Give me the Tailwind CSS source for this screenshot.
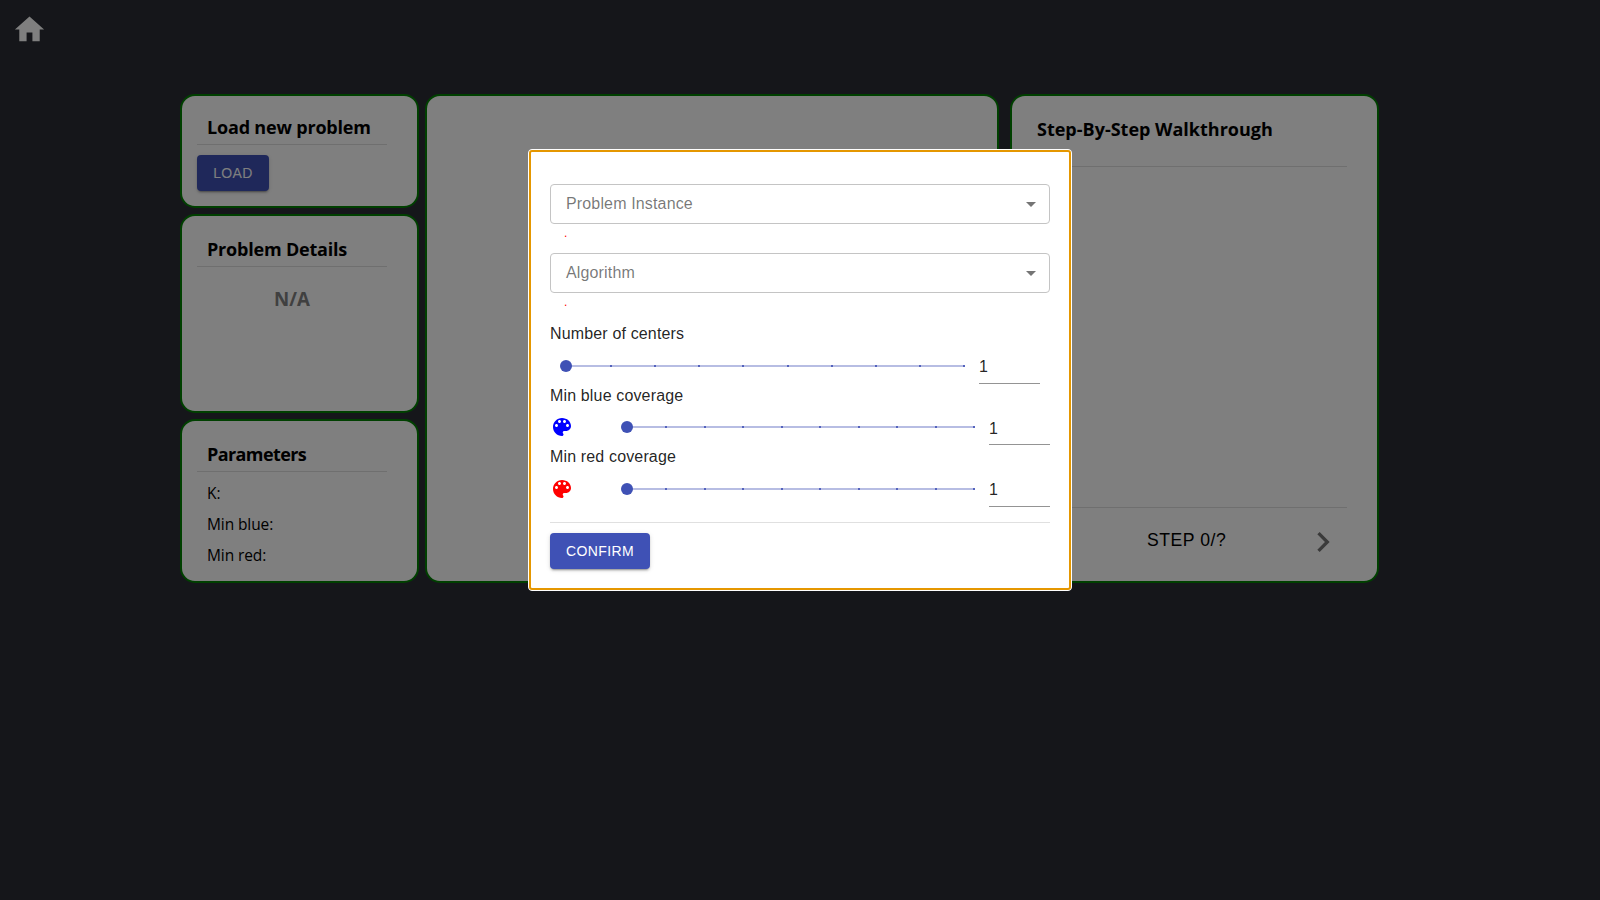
<!DOCTYPE html>
<html lang="en">
<head>
<meta charset="utf-8">
<title>Clustering walkthrough</title>
<script src="https://cdn.jsdelivr.net/npm/@tailwindcss/browser@4"></script>
</head>
<body class="h-screen overflow-hidden bg-[#2a2d34] font-['Liberation_Sans',Arial,sans-serif] text-black">

<header class="h-[94px] pl-3 pt-3">
  <svg class="size-[35px] fill-white" viewBox="0 0 24 24"><path d="M10 20v-6h4v6h5v-8h3L12 3 2 12h3v8z"/></svg>
</header>

<main class="flex h-[489px] pl-[180px] font-['Open_Sans','Noto_Sans',sans-serif]">
  <div class="flex w-[239px] flex-col gap-1.5">
    <section class="h-[114px] rounded-[15px] border-2 border-[#008000] bg-white pl-[15px] pt-[14px]">
      <h3 class="h-[35px] w-[190px] border-b border-[#dfdfdf] pl-2.5 text-[18px] font-bold leading-[34px] tracking-[-0.18px] whitespace-nowrap">Load new problem</h3>
      <button class="mt-2.5 h-9 w-[72px] rounded bg-[#3f51b5] font-['Liberation_Sans',Arial,sans-serif] text-sm tracking-[0.4px] text-white shadow-[0_3px_1px_-2px_rgba(0,0,0,.2),0_2px_2px_0_rgba(0,0,0,.14),0_1px_5px_0_rgba(0,0,0,.12)]">LOAD</button>
    </section>
    <section class="h-[199px] rounded-[15px] border-2 border-[#008000] bg-white pl-[15px] pt-4">
      <h3 class="h-[35px] w-[190px] border-b border-[#dfdfdf] pl-2.5 text-[18px] font-bold leading-[34px] tracking-[-0.2px] whitespace-nowrap">Problem Details</h3>
      <p class="mt-4 w-[190px] text-center text-[18.7px] font-bold leading-8 text-[#808080]">N/A</p>
    </section>
    <section class="h-[164px] rounded-[15px] border-2 border-[#008000] bg-white pl-[15px] pt-4">
      <h3 class="h-[35px] w-[190px] border-b border-[#dfdfdf] pl-2.5 text-[18px] font-bold leading-[34px] tracking-[-0.6px] whitespace-nowrap">Parameters</h3>
      <div class="pl-2.5 pt-[6px] text-[15.5px] leading-[31px] tracking-[-0.1px]">
        <p>K:</p><p>Min blue:</p><p>Min red:</p>
      </div>
    </section>
  </div>
  <section class="ml-1.5 w-[574px] rounded-[15px] border-2 border-[#008000] bg-white"></section>
  <section class="ml-[11px] flex w-[369px] flex-col rounded-[15px] border-2 border-[#008000] bg-white pl-[15px]">
    <h3 class="h-[71px] w-[320px] border-b border-[#dfdfdf] pl-2.5 pt-4 text-[18px] font-bold leading-[34px] whitespace-nowrap">Step-By-Step Walkthrough</h3>
    <div class="h-[340px]"></div>
    <footer class="flex w-[320px] border-t border-[#dfdfdf] font-['Liberation_Sans',Arial,sans-serif]">
      <span class="ml-[120px] mt-5 w-[156px] text-[17.6px] leading-6 tracking-[0.55px]">STEP 0/?</span>
      <svg class="mt-3.5 size-10 shrink-0 fill-[#757575]" viewBox="0 0 24 24"><path d="M10 6L8.59 7.41 13.17 12l-4.58 4.59L10 18l6-6z"/></svg>
    </footer>
  </section>
</main>

<div class="fixed inset-0 flex items-start justify-center bg-black/50 pt-[149px]">
  <div class="h-[442px] w-[544px] rounded-[4px] border border-white bg-white">
    <div class="h-[440px] rounded-[3px] border-2 border-[#e59700] pl-[19px] pt-8 text-black/87">
      <div class="flex h-10 w-[500px] items-center rounded border border-[#c4c4c4] pl-[15px] pr-1.5 text-black/54">
        <span class="flex-1 text-base leading-6 tracking-[0.15px]">Problem Instance</span>
        <svg class="size-6 fill-[#757575]" viewBox="0 0 24 24"><path d="M7 10l5 5 5-5z"/></svg>
      </div>
      <p class="h-[29px] pl-3.5 text-[12px] leading-[18px] text-[#ff0000]">.</p>
      <div class="flex h-10 w-[500px] items-center rounded border border-[#c4c4c4] pl-[15px] pr-1.5 text-black/54">
        <span class="flex-1 text-base leading-6 tracking-[0.15px]">Algorithm</span>
        <svg class="size-6 fill-[#757575]" viewBox="0 0 24 24"><path d="M7 10l5 5 5-5z"/></svg>
      </div>
      <p class="h-[29px] pl-3.5 text-[12px] leading-[18px] text-[#ff0000]">.</p>

      <p class="h-6 text-base leading-6 tracking-[0.15px]">Number of centers</p>
      <div class="flex h-[38px] w-[500px] pl-4">
        <div class="relative mt-[19px] flex h-0.5 w-[399px] justify-between bg-[#b7bde3]">
          <i class="w-0.5 bg-[#3f51b5]"></i><i class="w-0.5 bg-[#5463bd]"></i><i class="w-0.5 bg-[#5463bd]"></i><i class="w-0.5 bg-[#5463bd]"></i><i class="w-0.5 bg-[#5463bd]"></i><i class="w-0.5 bg-[#5463bd]"></i><i class="w-0.5 bg-[#5463bd]"></i><i class="w-0.5 bg-[#5463bd]"></i><i class="w-0.5 bg-[#5463bd]"></i><i class="w-0.5 bg-[#5463bd]"></i>
          <b class="absolute -left-1.5 -top-[5px] size-3 rounded-full bg-[#3f51b5]"></b>
        </div>
        <span class="ml-3.5 mt-[9px] h-[29px] w-[61px] border-b border-[#949494] text-base leading-6">1</span>
      </div>

      <p class="h-6 text-base leading-6 tracking-[0.15px]">Min blue coverage</p>
      <div class="flex h-[37px] w-[500px]">
        <svg class="mt-[7px] size-6 fill-[#0000ff]" viewBox="0 0 24 24"><path d="M12 3c-4.97 0-9 4.03-9 9s4.03 9 9 9c.83 0 1.5-.67 1.5-1.5 0-.39-.15-.74-.39-1.01-.23-.26-.38-.61-.38-.99 0-.83.67-1.5 1.5-1.5H16c2.76 0 5-2.24 5-5 0-4.42-4.03-8-9-8zm-5.5 9c-.83 0-1.5-.67-1.5-1.5S5.67 9 6.500 9 8 9.670 8 10.500 7.330 12 6.500 12zm3-4C8.670 8 8 7.330 8 6.500S8.670 5 9.500 5s1.500.670 1.500 1.500S10.330 8 9.500 8zm5 0c-.83 0-1.500-.670-1.500-1.500S13.670 5 14.500 5s1.500.670 1.500 1.500S15.330 8 14.500 8zm3 4c-.83 0-1.500-.670-1.500-1.500S16.670 9 17.500 9s1.500.670 1.500 1.500-.670 1.500-1.500 1.500z"/></svg>
        <div class="relative ml-[53px] mt-[18px] flex h-0.5 w-[348px] justify-between bg-[#b7bde3]">
          <i class="w-0.5 bg-[#3f51b5]"></i><i class="w-0.5 bg-[#5463bd]"></i><i class="w-0.5 bg-[#5463bd]"></i><i class="w-0.5 bg-[#5463bd]"></i><i class="w-0.5 bg-[#5463bd]"></i><i class="w-0.5 bg-[#5463bd]"></i><i class="w-0.5 bg-[#5463bd]"></i><i class="w-0.5 bg-[#5463bd]"></i><i class="w-0.5 bg-[#5463bd]"></i><i class="w-0.5 bg-[#5463bd]"></i>
          <b class="absolute -left-1.5 -top-[5px] size-3 rounded-full bg-[#3f51b5]"></b>
        </div>
        <span class="ml-3.5 mt-[9px] h-7 w-[61px] border-b border-[#949494] text-base leading-6">1</span>
      </div>

      <p class="h-6 text-base leading-6 tracking-[0.15px]">Min red coverage</p>
      <div class="flex h-[54px] w-[500px] border-b border-[#e0e0e0]">
        <svg class="mt-2 size-6 fill-[#ff0000]" viewBox="0 0 24 24"><path d="M12 3c-4.97 0-9 4.03-9 9s4.03 9 9 9c.83 0 1.5-.67 1.5-1.5 0-.39-.15-.74-.39-1.01-.23-.26-.38-.61-.38-.99 0-.83.67-1.5 1.5-1.5H16c2.76 0 5-2.24 5-5 0-4.42-4.03-8-9-8zm-5.5 9c-.83 0-1.5-.67-1.5-1.5S5.67 9 6.500 9 8 9.670 8 10.500 7.330 12 6.500 12zm3-4C8.670 8 8 7.330 8 6.500S8.670 5 9.500 5s1.500.670 1.500 1.500S10.330 8 9.500 8zm5 0c-.83 0-1.500-.670-1.500-1.500S13.670 5 14.500 5s1.500.670 1.500 1.500S15.330 8 14.500 8zm3 4c-.83 0-1.500-.670-1.500-1.500S16.670 9 17.500 9s1.500.670 1.500 1.500-.670 1.500-1.500 1.500z"/></svg>
        <div class="relative ml-[53px] mt-[19px] flex h-0.5 w-[348px] justify-between bg-[#b7bde3]">
          <i class="w-0.5 bg-[#3f51b5]"></i><i class="w-0.5 bg-[#5463bd]"></i><i class="w-0.5 bg-[#5463bd]"></i><i class="w-0.5 bg-[#5463bd]"></i><i class="w-0.5 bg-[#5463bd]"></i><i class="w-0.5 bg-[#5463bd]"></i><i class="w-0.5 bg-[#5463bd]"></i><i class="w-0.5 bg-[#5463bd]"></i><i class="w-0.5 bg-[#5463bd]"></i><i class="w-0.5 bg-[#5463bd]"></i>
          <b class="absolute -left-1.5 -top-[5px] size-3 rounded-full bg-[#3f51b5]"></b>
        </div>
        <span class="ml-3.5 mt-[9px] h-[29px] w-[61px] border-b border-[#949494] text-base leading-6">1</span>
      </div>
      <button class="mt-2.5 h-9 w-[100px] rounded bg-[#3f51b5] text-sm tracking-[0.4px] text-white shadow-[0_3px_1px_-2px_rgba(0,0,0,.2),0_2px_2px_0_rgba(0,0,0,.14),0_1px_5px_0_rgba(0,0,0,.12)]">CONFIRM</button>
    </div>
  </div>
</div>
</body>
</html>
